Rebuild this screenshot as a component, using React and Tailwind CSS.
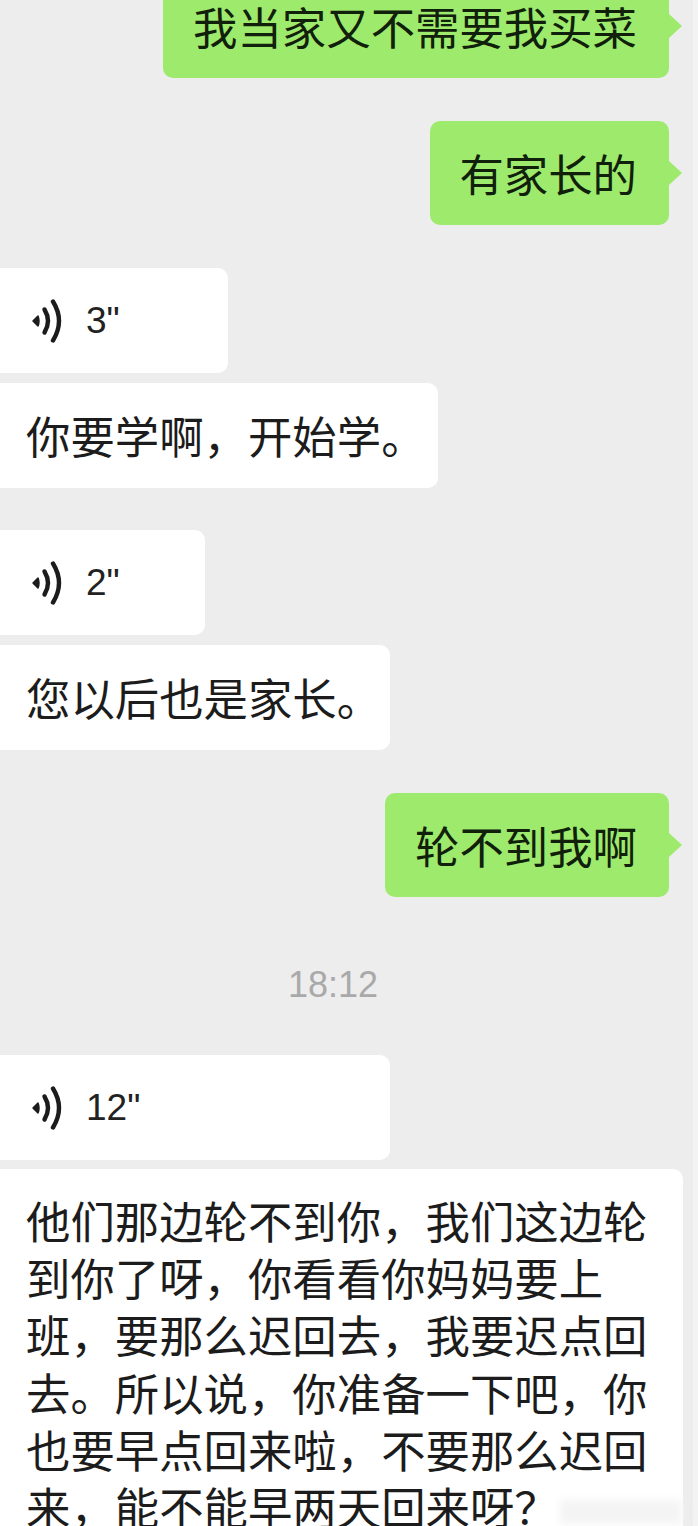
const font = { fontFamily: '"Noto Sans CJK SC", "Liberation Sans", sans-serif' };
const latin = { fontFamily: '"Liberation Sans", sans-serif' };
const C = "\uFF0C";
const Q = "\uFF1F";

function Voice({ width, label }) {
  return (
    <div className={`h-[105px] bg-white rounded-r-[10px] flex items-center pl-[31px] gap-[22px] ${width}`}>
      <svg width="33" height="44" viewBox="0 0 33 44" fill="none" stroke="#1c1c1c" strokeLinecap="round">
        <path d="M2 22 L7 17 Q9 22 7 27 Z" fill="#1c1c1c" stroke="#1c1c1c" strokeWidth="1.5" strokeLinejoin="round" />
        <path d="M13.5 10.5 Q20.5 22 13.5 33.5" strokeWidth="4.4" />
        <path d="M22 2.5 Q34 22 22 41.5" strokeWidth="4.4" />
      </svg>
      <span className="text-[37px] leading-none text-[#222222]" style={latin}>{label}</span>
    </div>
  );
}

function Left({ width, children, className = "" }) {
  return (
    <div className={`h-[105px] bg-white rounded-r-[10px] flex items-center pl-[26px] text-[44.4px] leading-none text-[#1c1c1c] whitespace-nowrap ${width} ${className}`}>
      {children}
    </div>
  );
}

function Right({ width, children, className = "" }) {
  return (
    <div className={`relative self-end mr-[29px] h-[104px] ${width} ${className} bg-[#9dea6c] rounded-[10px] flex items-center justify-end pr-[32px] text-[44.4px] leading-none text-[#10200b] whitespace-nowrap`}>
      {children}
      <span className="absolute left-full top-1/2 -translate-y-1/2 w-0 h-0 border-y-[12px] border-y-transparent border-l-[13px] border-l-[#9dea6c]" />
    </div>
  );
}

const para = `他们那边轮不到你${C}我们这边轮到你了呀${C}你看看你妈妈要上班${C}要那么迟回去${C}我要迟点回去。所以说${C}你准备一下吧${C}你也要早点回来啦${C}不要那么迟回来${C}能不能早两天回来呀${Q}`;

export default function App() {
  return (
    <div className="relative h-[1526px] w-[698px] overflow-hidden bg-[#ededed]" style={font}>
      <div className="flex flex-col -mt-[26px]">
        <Right width="w-[506px]">我当家又不需要我买菜</Right>
        <Right width="w-[239px]" className="mt-[43px]">有家长的</Right>
        <Voice width="w-[228px] mt-[43px]" label={'3"'} />
        <Left width="w-[438px]" className="mt-[10px]">{`你要学啊${C}开始学。`}</Left>
        <Voice width="w-[205px] mt-[42px]" label={'2"'} />
        <Left width="w-[390px]" className="mt-[10px]">您以后也是家长。</Left>
        <Right width="w-[284px]" className="mt-[43px]">轮不到我啊</Right>
        <div className="mt-[66px] h-[44px] w-[666px] flex items-center justify-center text-[36px] leading-none text-[#a9a9a9]" style={latin}>18:12</div>
        <Voice width="w-[390px] mt-[48px]" label={'12"'} />
        <div className="mt-[9px] w-[683px] bg-white rounded-r-[10px] pl-[26px] pr-[20px] pt-[22px] pb-[20px] text-[44.4px] leading-[57.2px] text-[#1c1c1c]">
          {para}
        </div>
      </div>
      <div className="absolute right-0 top-0 h-full w-[5px] bg-[#f3f3f3]" />
      <div className="absolute left-[560px] top-[1500px] h-[24px] w-[122px] bg-[#f4f4f4] blur-[4px]" />
    </div>
  );
}
